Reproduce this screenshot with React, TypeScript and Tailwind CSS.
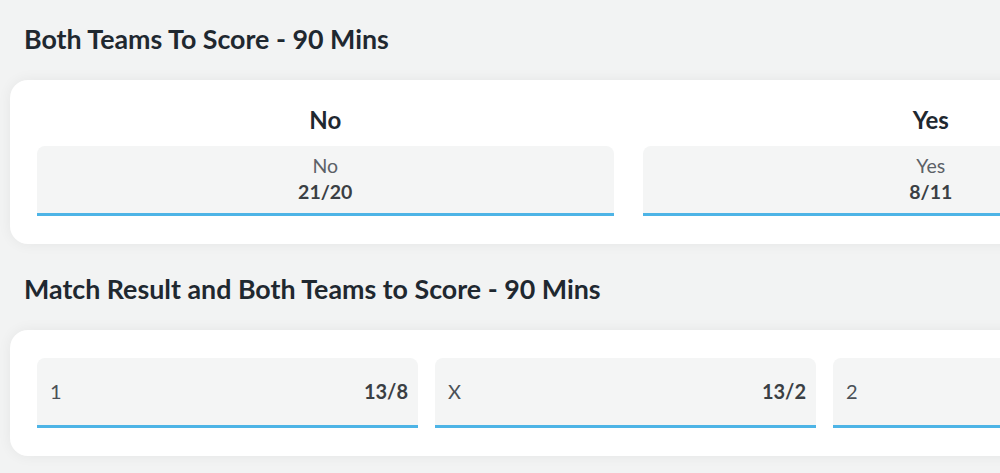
import React from 'react';

const font = { fontFamily: 'Lato, "Open Sans", sans-serif' };

function OddsTile({ label, odds }: { label: string; odds: string }) {
  return (
    <button className="flex h-[70px] flex-col items-center justify-center rounded-t-[8px] border-b-[3px] border-[#4db4e6] bg-[#f4f5f5] pb-[2px] leading-[26px]">
      <span className="text-[19.5px] text-[#5b6167]">{label}</span>
      <span className="text-[19.5px] font-bold text-[#3a3f44]">{odds}</span>
    </button>
  );
}

function RowTile({ label, odds }: { label: string; odds?: string }) {
  return (
    <button className="flex h-[70px] items-center justify-between rounded-t-[8px] border-b-[3px] border-[#4db4e6] bg-[#f4f5f5] pl-[13px] pr-[10px] pb-[2px] text-[20px]">
      <span className="text-[#4b5157]">{label}</span>
      {odds && <span className="font-bold text-[#3a3f44]">{odds}</span>}
    </button>
  );
}

export default function App() {
  const columns = [
    { head: 'No', label: 'No', odds: '21/20' },
    { head: 'Yes', label: 'Yes', odds: '8/11' },
  ];
  const results: { label: string; odds?: string }[] = [
    { label: '1', odds: '13/8' },
    { label: 'X', odds: '13/2' },
    { label: '2' },
  ];

  return (
    <div className="h-[473px] w-[1000px] overflow-hidden bg-[#f2f3f3] pl-[10px] pt-[24px]" style={font}>
      <h2 className="pl-[14px] text-[26.8px] font-bold leading-[30px] text-[#1f2830]">
        Both Teams To Score - 90 Mins
      </h2>

      <section className="mt-[26px] w-[1236px] rounded-[18px] bg-white px-[27px] pt-[26px] pb-[28px] shadow-[0_0_14px_rgba(0,0,0,0.06)]">
        <div className="grid grid-cols-2 gap-x-[29px]">
          {columns.map((c) => (
            <div key={c.head} className="flex flex-col gap-[12px]">
              <div className="text-center text-[24px] font-bold leading-[28px] text-[#1f2830]">{c.head}</div>
              <OddsTile label={c.label} odds={c.odds} />
            </div>
          ))}
        </div>
      </section>

      <h2 className="mt-[30px] pl-[14px] text-[26.8px] font-bold leading-[30px] text-[#1f2830]">
        Match Result and Both Teams to Score - 90 Mins
      </h2>

      <section className="mt-[26px] w-[1236px] rounded-[18px] bg-white px-[27px] py-[28px] shadow-[0_0_14px_rgba(0,0,0,0.06)]">
        <div className="grid w-[1177px] grid-cols-3 gap-x-[17px]">
          {results.map((r) => (
            <RowTile key={r.label} label={r.label} odds={r.odds} />
          ))}
        </div>
      </section>
    </div>
  );
}
